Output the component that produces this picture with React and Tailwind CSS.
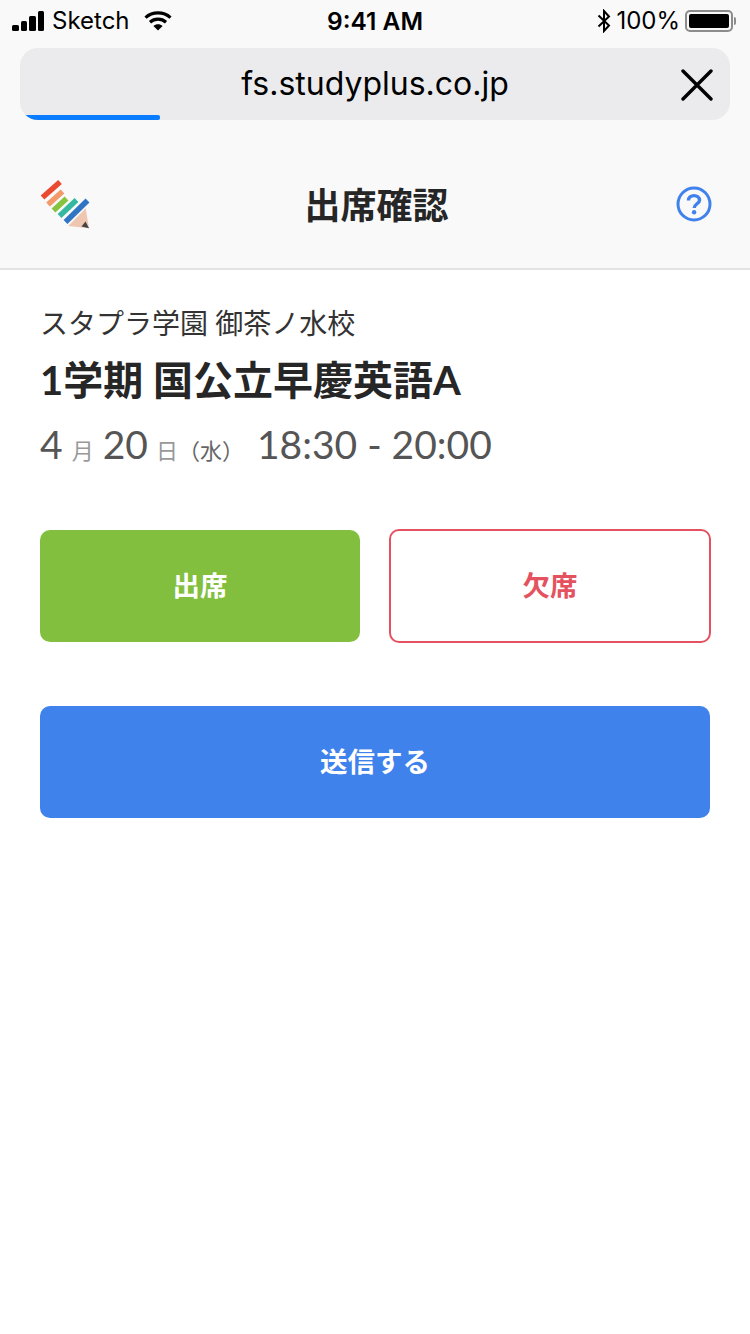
import React from 'react';

const sf = "font-['Inter','Liberation_Sans',sans-serif]";
const jp = "font-['Lato','Noto_Sans_CJK_JP',sans-serif]";

function Signal() {
  return (
    <div className="flex items-end gap-[2px]">
      <div className="w-[6.5px] h-[6px] rounded-[1.5px] bg-black" />
      <div className="w-[6.5px] h-[10px] rounded-[1.5px] bg-black" />
      <div className="w-[6.5px] h-[15px] rounded-[1.5px] bg-black" />
      <div className="w-[6.5px] h-[20px] rounded-[1.5px] bg-black" />
    </div>
  );
}

function Wifi() {
  return (
    <svg width="28" height="20" viewBox="0 0 28 20" fill="none" stroke="black" strokeWidth="3.2">
      <path d="M1.5 6.6C8.5 0.4 19.5 0.4 26.5 6.6" />
      <path d="M6 11.2C10.5 7.2 17.5 7.2 22 11.2" />
      <path d="M14 19.5L9.4 15C12 12.6 16 12.6 18.6 15Z" fill="black" stroke="none" />
    </svg>
  );
}

function Bluetooth() {
  return (
    <svg width="14" height="24" viewBox="0 0 14 24" fill="none" stroke="black" strokeWidth="2">
      <path d="M1.5 6.5L12 16.5L7 22V2L12 7.5L1.5 17.5" />
    </svg>
  );
}

// coordinates are page pixels, hence the viewBox
function Pencil() {
  return (
    <svg width="54" height="54" viewBox="38 178 54 54">
      <g strokeWidth="5.5" fill="none">
        <path d="M42.5 197.5L60 182" stroke="#ea4a2f" />
        <path d="M48 204.5L62.5 191.5" stroke="#f39a6b" />
        <path d="M53.5 210.5L66.5 198.5" stroke="#86c440" />
        <path d="M59.5 216L76.5 200" stroke="#35b8a0" />
        <path d="M65.5 222L87.5 200.5" stroke="#2f75c4" />
      </g>
      <path d="M68.3 226L85.7 208.3L89 228.3Z" fill="#efc6b0" />
      <path d="M81.5 226.5L85.5 221.5L89 228.3Z" fill="#444" />
    </svg>
  );
}

function Help() {
  return (
    <svg width="36" height="36" viewBox="0 0 36 36" fill="none" stroke="#3f82ec">
      <circle cx="18" cy="18" r="16" strokeWidth="3" />
      <path d="M12.5 14.5C12.5 11.4 15 9.6 18 9.6C21 9.6 23.5 11.4 23.5 14.2C23.5 17.6 18.2 18 18.2 22" strokeWidth="3.4" />
      <circle cx="18.1" cy="26.2" r="2.2" fill="#3f82ec" stroke="none" />
    </svg>
  );
}

export default function App() {
  return (
    <div className={`w-[750px] h-[1334px] bg-white flex flex-col ${jp}`}>
      {/* status bar + url bar */}
      <div className="bg-[#f9f9f9] border-b-2 border-[#e3e3e3]">
        <div className={`h-[40px] pt-[2px] pl-[12px] pr-[14px] flex items-center justify-between text-black ${sf}`}>
          <div className="flex-1 flex items-center gap-[8px]">
            <Signal />
            <span className="text-[24px] leading-none">Sketch</span>
            <div className="ml-[6px]"><Wifi /></div>
          </div>
          <span className="ml-[2px] text-[24.5px] leading-none font-semibold">9:41 AM</span>
          <div className="flex-1 flex items-center justify-end">
            <Bluetooth />
            <span className="ml-[5px] text-[24px] leading-none">100%</span>
            <div className="ml-[5px] flex items-center">
              <div className="w-[48px] h-[22px] p-[2px] rounded-[5px] border-2 border-[#8c8c8c]">
                <div className="w-full h-full rounded-[2px] bg-black" />
              </div>
              <div className="w-[2px] h-[8px] rounded-r-full bg-[#8c8c8c] ml-[1px]" />
            </div>
          </div>
        </div>
        <div className="mx-[20px] mt-[8px] h-[72px] rounded-[18px] bg-[#ebebed] relative overflow-hidden flex items-center justify-center">
          <span className={`text-[32px] leading-none text-black ${sf}`}>fs.studyplus.co.jp</span>
          <svg className="absolute right-[17px] top-[21px]" width="32" height="32" viewBox="0 0 32 32" stroke="black" strokeWidth="3.4" strokeLinecap="round">
            <path d="M2 2L30 30M30 2L2 30" />
          </svg>
          <div className="absolute left-0 bottom-0 w-[140px] h-[5px] bg-[#0a7cff] rounded-r-[2px]" />
        </div>
        {/* page header */}
        <div className="h-[148px] pt-[22px] pl-[38px] pr-[38px] flex items-center">
          <div className="flex-1"><Pencil /></div>
          <h1 className="ml-[3px] text-[36px] leading-none font-bold text-[#262626]">出席確認</h1>
          <div className="flex-1 flex justify-end -mt-[2px]"><Help /></div>
        </div>
      </div>

      {/* class info */}
      <div className="px-[40px] pt-[35px]">
        <p className="text-[28px] leading-[36px] text-[#333]">スタプラ学園 御茶ノ水校</p>
        <h2 className="mt-[15px] text-[40px] leading-[48px] font-bold text-[#262626]">1学期 国公立早慶英語A</h2>
        <div className="mt-[16px] flex items-baseline text-[#555] text-[39px] leading-[48px]">
          <span>4</span>
          <span className="ml-[9px] text-[22px] text-[#999]">月</span>
          <span className="ml-[9px]">20</span>
          <span className="ml-[8px] text-[22px] text-[#999]">日</span>
          <span className="text-[22px] text-[#666]">（水）</span>
          <span className="ml-[13px]">18:30 - 20:00</span>
        </div>

        <div className="mt-[55px] flex items-center gap-[29px]">
          <button className="shrink-0 w-[320px] h-[112px] rounded-[10px] bg-[#82bf3e] text-white text-[27.5px] font-bold">出席</button>
          <button className="shrink-0 w-[322px] h-[114px] -my-[1px] rounded-[10px] bg-white border-2 border-[#e5525f] text-[#e5525f] text-[27.5px] font-bold">欠席</button>
        </div>
        <button className="mt-[64px] w-[670px] h-[112px] rounded-[10px] bg-[#3f82ec] text-white text-[27.5px] font-bold">送信する</button>
      </div>
    </div>
  );
}
